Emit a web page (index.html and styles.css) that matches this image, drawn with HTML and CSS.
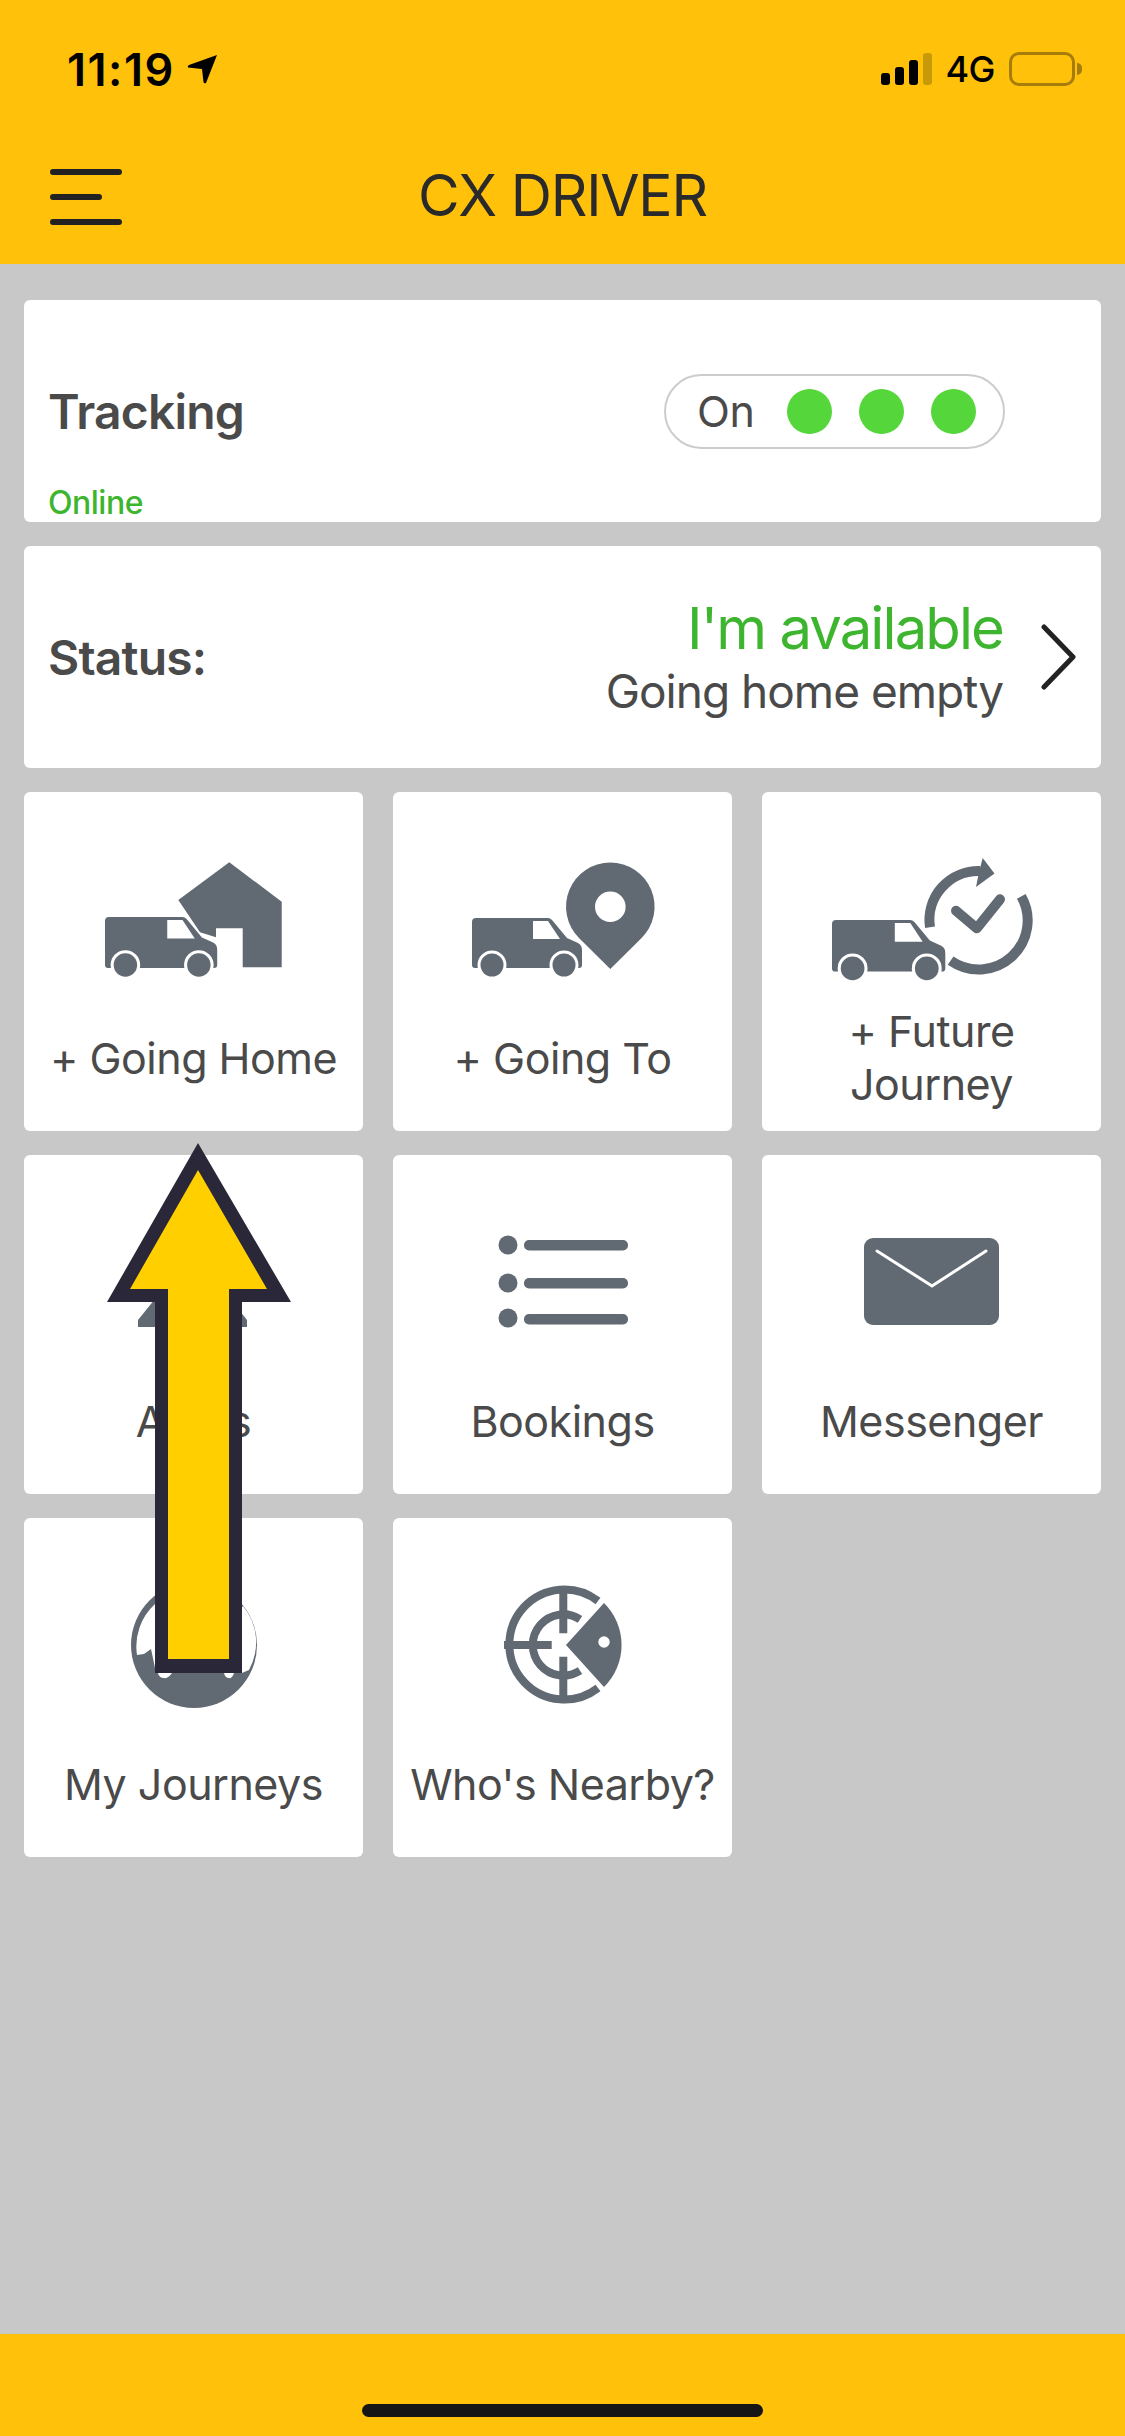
FILE: index.html

```html
<!DOCTYPE html>
<html>
    <head>
        <meta charset="UTF-8" name="viewport" content="width=device-width, initial-scale=1.0">
        <title>CX Driver</title>
        <link rel="stylesheet" href="styles.css">
    </head>
    <body>
        <header class="top">
            <div class="status-bar">
                <div class="clock">
                    <span>11:19</span>
                    <svg class="locator" viewBox="0 0 31 30"><path d="M30 1 L19 29 Q17 30 16.500 28 L15 15 L1 13.500 Q0 12 2 11 Z"/></svg>
                </div>
                <div class="network">
                    <div class="signal">
                        <span class="bar bar-1"></span>
                        <span class="bar bar-2"></span>
                        <span class="bar bar-3"></span>
                        <span class="bar bar-4"></span>
                    </div>
                    <span class="net-type">4G</span>
                    <div class="battery"></div>
                    <div class="battery-cap"></div>
                </div>
            </div>
            <div class="nav">
                <div class="burger">
                    <span></span>
                    <span class="short"></span>
                    <span></span>
                </div>
                <h1>CX DRIVER</h1>
            </div>
        </header>

        <main class="content">
            <section class="panel tracking">
                <div class="tracking-row">
                    <span class="panel-title">Tracking</span>
                    <div class="pill">
                        <span class="pill-text">On</span>
                        <span class="dot"></span>
                        <span class="dot"></span>
                        <span class="dot"></span>
                    </div>
                </div>
                <span class="online">Online</span>
            </section>

            <section class="panel status">
                <span class="panel-title">Status:</span>
                <div class="status-text">
                    <div class="available">I'm available</div>
                    <div class="sub">Going home empty</div>
                </div>
                <svg class="chevron" viewBox="0 0 36 66"><path d="M3 3 L32 33 L3 63"/></svg>
            </section>

            <section class="tiles">
                <div class="tile">
                    <svg class="icon" viewBox="0 0 339 193">
                        <defs>
                            <g id="van">
                                <path d="M4 0 H76 Q78 0 80 2 L95 20 L106 25 Q110 27 110 32 V47 Q110 50 107 50 H3 Q0 50 0 47 V4 Q0 0 4 0 Z"/>
                                <path class="cut" d="M61 3 H76 L88 21 H61 Z"/>
                                <circle class="cut" cx="20" cy="47" r="14.500"/>
                                <circle class="cut" cx="92" cy="47" r="14.500"/>
                                <circle cx="20" cy="47" r="11.500"/>
                                <circle cx="92" cy="47" r="11.500"/>
                            </g>
                        </defs>
                        <use href="#van" transform="translate(81 125) scale(1.020)"/>
                        <path d="M205.300 70.300 L257.700 109.700 V175.300 H218.700 V136.300 H192 V145.300 L176 140.300 L154.300 108 Z"/>
                    </svg>
                    <div class="tile-label">+ Going Home</div>
                </div>
                <div class="tile">
                    <svg class="icon" viewBox="0 0 339 193">
                        <use href="#van" x="79" y="126"/>
                        <path d="M217.300 70.400 A44.300 44.300 0 0 1 248.600 146 L217.300 177 L186 146 A44.300 44.300 0 0 1 217.300 70.400 Z"/>
                        <circle class="cut" cx="217.300" cy="114.700" r="15.300"/>
                    </svg>
                    <div class="tile-label">+ Going To</div>
                </div>
                <div class="tile">
                    <svg class="icon" viewBox="0 0 339 193">
                        <use href="#van" transform="translate(70 128) scale(1.030)"/>
                        <path class="line thick" d="M168 135.300 A49 49 0 0 1 218 79"/>
                        <path d="M220.700 66 L232.500 81.500 L214 95 L217 80 Z"/>
                        <path class="line thick" d="M259.300 104.400 A49 49 0 0 1 188.600 168.700"/>
                        <path class="line round" d="M194 118.700 L214.700 136.300 L238 107.300"/>
                    </svg>
                    <div class="tile-label">+ Future Journey</div>
                </div>
                <div class="tile">
                    <svg class="icon" viewBox="0 0 339 193">
                        <path d="M114 172 V165 L169 97 L223 165 V172 Z"/>
                    </svg>
                    <div class="tile-label">Alerts</div>
                </div>
                <div class="tile">
                    <svg class="icon" viewBox="0 0 339 193">
                        <circle cx="115" cy="90" r="9.500"/>
                        <circle cx="115" cy="128" r="9.500"/>
                        <circle cx="115" cy="163" r="9.500"/>
                        <rect x="131" y="85" width="104" height="10.500" rx="5"/>
                        <rect x="131" y="123" width="104" height="10.500" rx="5"/>
                        <rect x="131" y="159" width="104" height="10.500" rx="5"/>
                    </svg>
                    <div class="tile-label">Bookings</div>
                </div>
                <div class="tile">
                    <svg class="icon" viewBox="0 0 339 193">
                        <rect x="102" y="83" width="135" height="87" rx="9"/>
                        <path class="fold" d="M115 96 L170 131 L224 96"/>
                    </svg>
                    <div class="tile-label">Messenger</div>
                </div>
                <div class="tile">
                    <svg class="icon" viewBox="0 0 339 193">
                        <circle cx="170" cy="127" r="63"/>
                        <path class="cut" d="M113 137 A57.500 57.500 0 0 1 131 86 Q134 97 150 98 H210 L219 88 A57 57 0 0 1 225 152 L218 155 H210 Q208 161 205 160 Q201 160 200 155 H148 Q144 161 140 160 Q135 160 134 155 L131 150 Q129 140 127 131 L120 136 Z"/>
                    </svg>
                    <div class="tile-label">My Journeys</div>
                </div>
                <div class="tile">
                    <svg class="icon" viewBox="0 0 339 193">
                        <path class="line" d="M205 83 A55 55 0 1 0 205 170"/>
                        <path class="line" d="M187 101.300 A30.600 30.600 0 1 0 187 152.700"/>
                        <path class="line" d="M170.300 68 V115.300 M170.300 138.700 V185 M111 127 H158.700"/>
                        <path d="M173 127 L211 85 A59 59 0 0 1 211 169 Z"/>
                        <circle class="cut" cx="211" cy="124" r="5.700"/>
                    </svg>
                    <div class="tile-label">Who's Nearby?</div>
                </div>
            </section>
        </main>

        <footer class="bottom">
            <div class="home-bar"></div>
        </footer>

        <!-- annotation drawn over the screenshot -->
        <svg class="pointer" viewBox="0 0 184 530">
            <polygon class="pointer-edge" points="91,0 184,159 135,159 135,530 48,530 48,159 0,159"/>
            <polygon class="pointer-fill" points="91,27 160,146 122,146 122,516 61,516 61,146 23,146"/>
        </svg>
    </body>
</html>
```

FILE: styles.css

```css
/* Base */
* {
    box-sizing: border-box;
}

body {
    font-family: Inter, "Liberation Sans", sans-serif;
    background-color: #c8c8c8;
    color: #4a4a4a;
    margin: 0;
    width: 1125px;
    height: 2436px;
    display: flex;
    flex-direction: column;
    position: relative;
    overflow: hidden;
}

/* Header */
.top {
    background-color: #ffc10a;
    height: 264px;
}

.status-bar {
    height: 138px;
    display: flex;
    justify-content: space-between;
    align-items: center;
    padding: 0 43px 0 67px;
    color: #000000;
}

.clock {
    display: flex;
    align-items: center;
    gap: 12px;
    font-size: 45px;
    font-weight: 600;
    letter-spacing: 1.500px;
}

.locator {
    width: 31px;
    height: 30px;
    fill: #000000;
}

.network {
    display: flex;
    align-items: center;
}

.signal {
    display: flex;
    align-items: flex-end;
    gap: 5px;
    height: 32px;
}

.bar {
    width: 9px;
    border-radius: 3px;
    background-color: #000000;
}

.bar-1 { height: 12px; }
.bar-2 { height: 18px; }
.bar-3 { height: 25px; }
.bar-4 { height: 32px; background-color: #c99a08; }

.net-type {
    font-size: 36px;
    font-weight: 500;
    margin: 0 14px 0 13px;
    letter-spacing: -0.500px;
}

.battery {
    width: 66px;
    height: 34px;
    border: 3px solid #a67c0a;
    border-radius: 10px;
}

.battery-cap {
    width: 5px;
    height: 12px;
    margin-left: 2px;
    background-color: #a67c0a;
    border-radius: 0 5px 5px 0;
}

.nav {
    height: 118px;
    display: grid;
    grid-template-columns: 1fr auto 1fr;
    align-items: center;
    padding-left: 50px;
}

.burger {
    display: flex;
    flex-direction: column;
    gap: 19px;
}

.burger span {
    width: 72px;
    height: 6px;
    border-radius: 3px;
    background-color: #222222;
}

.burger .short {
    width: 52px;
}

h1 {
    margin: 0 50px 4px 0;
    font-size: 57px;
    font-weight: 400;
    color: #2a2a2a;
    letter-spacing: -1.200px;
}

/* Content */
.content {
    flex: 1;
    padding: 36px 24px;
    display: flex;
    flex-direction: column;
    gap: 24px;
}

.panel {
    background-color: #ffffff;
    border-radius: 6px;
    height: 222px;
    padding: 0 24px;
}

.panel-title {
    font-size: 48px;
    font-weight: 600;
    letter-spacing: -0.800px;
}

.tracking {
    display: grid;
    grid-template-rows: 1fr auto 1fr;
}

.tracking-row {
    grid-row: 2;
    display: flex;
    justify-content: space-between;
    align-items: center;
    padding-right: 72px;
}

.pill {
    width: 341px;
    height: 75px;
    border: 2px solid #cccccc;
    border-radius: 38px;
    display: flex;
    align-items: center;
    padding-left: 31px;
}

.pill-text {
    font-size: 43px;
    width: 90px;
    letter-spacing: -0.500px;
}

.dot {
    width: 45px;
    height: 45px;
    border-radius: 50%;
    background-color: #55d63a;
    margin-right: 27px;
}

.online {
    grid-row: 3;
    align-self: end;
    font-size: 32px;
    font-weight: 500;
    color: #3db52f;
    letter-spacing: -0.500px;
}

.status {
    display: flex;
    align-items: center;
}

.status-text {
    margin-left: auto;
    text-align: right;
}

.available {
    font-size: 58px;
    line-height: 68px;
    color: #3db52f;
    letter-spacing: -1.900px;
}

.sub {
    font-size: 46px;
    line-height: 58px;
    letter-spacing: -1px;
}

.chevron {
    width: 36px;
    height: 66px;
    margin-left: 38px;
    fill: none;
    stroke: #222222;
    stroke-width: 5;
    stroke-linecap: round;
    stroke-linejoin: round;
}

/* Tiles */
.tiles {
    display: grid;
    grid-template-columns: repeat(3, 339px);
    grid-auto-rows: 339px;
    column-gap: 30px;
    row-gap: 24px;
}

.tile {
    background-color: #ffffff;
    border-radius: 6px;
    display: grid;
    grid-template-rows: 193px 146px;
    justify-items: center;
}

.icon {
    width: 339px;
    height: 193px;
    fill: #616972;
}

.tile-label {
    align-self: center;
    width: 310px;
    text-align: center;
    font-size: 43px;
    line-height: 53px;
    letter-spacing: -0.500px;
}

.cut {
    fill: #ffffff;
}

.line {
    fill: none;
    stroke: #616972;
    stroke-width: 8;
}

.thick {
    stroke-width: 10;
}

.round {
    stroke-width: 10;
    stroke-linecap: round;
    stroke-linejoin: round;
}

.fold {
    fill: none;
    stroke: #ffffff;
    stroke-width: 3;
    stroke-linecap: round;
}

/* Bottom bar */
.bottom {
    height: 102px;
    background-color: #ffc10a;
    display: flex;
    justify-content: center;
    padding-top: 70px;
}

.home-bar {
    width: 401px;
    height: 13px;
    border-radius: 7px;
    background-color: #151515;
}

/* Arrow over the page */
.pointer {
    position: absolute;
    left: 107px;
    top: 1143px;
    width: 184px;
    height: 530px;
}

.pointer-edge {
    fill: #2a2838;
}

.pointer-fill {
    fill: #ffcf00;
}
```
